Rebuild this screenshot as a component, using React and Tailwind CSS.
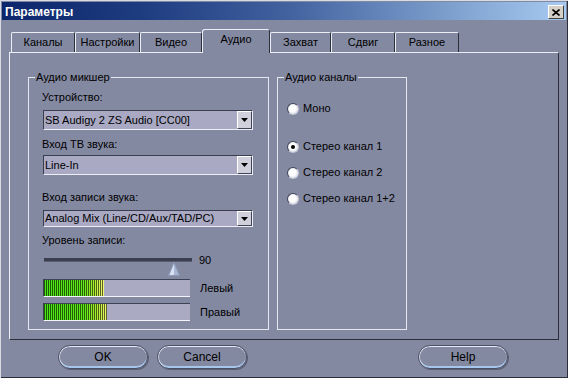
import React from "react";

const BG = "bg-[#8489a2]";

function Tab({ label, w, selected }) {
  if (selected) {
    return (
      <div
        className={`${w} h-[24px] ${BG} border-t border-l border-r border-t-[#eceef6] border-l-[#eceef6] border-r-[#2c2e3a] rounded-t-[3px] flex justify-center pt-[3px]`}
      >
        {label}
      </div>
    );
  }
  return (
    <div
      className={`${w} h-[20px] mb-[1px] ${BG} border-t border-l border-r border-t-[#eceef6] border-l-[#eceef6] border-r-[#2c2e3a] rounded-t-[2px] flex items-center justify-center`}
    >
      {label}
    </div>
  );
}

function Select({ value, h }) {
  return (
    <div
      className={`ml-[1px] w-[210px] ${h} bg-[#a9a9c3] border border-t-[#3a3e50] border-l-[#3a3e50] border-b-[#eeeef6] border-r-[#eeeef6] flex items-stretch justify-between`}
    >
      <span className="pl-[1px] self-center whitespace-nowrap">{value}</span>
      <span className="w-[15px] bg-[#d0d0dc] border border-t-[#ffffff] border-l-[#ffffff] border-b-[#40445a] border-r-[#40445a] flex items-center justify-center">
        <svg width="7" height="4" viewBox="0 0 7 4">
          <polygon points="0,0 7,0 3.5,4" fill="#000" />
        </svg>
      </span>
    </div>
  );
}

function Level({ fill }) {
  return (
    <div className="ml-[1px] w-[147px] h-[18px] bg-[#aaaac3] border-t border-l border-b border-t-[#3e4256] border-l-[#3e4256] border-b-[#f4f4fa] flex">
      <div
        className="h-full bg-[linear-gradient(90deg,#48e414_0%,#60ec18_65%,#b0f030_85%,#f4f870_100%)] flex"
        style={{ width: fill }}
      >
        <div className="w-full h-full bg-[repeating-linear-gradient(90deg,#000000_0px_1px,#00000000_1px_2px)] opacity-60" />
      </div>
    </div>
  );
}

function Radio({ checked }) {
  return (
    <span className="w-[12px] h-[12px] rounded-full flex items-center justify-center border border-t-[#44485c] border-l-[#44485c] border-b-[#c4c6d6] border-r-[#c4c6d6] bg-[radial-gradient(circle_at_45%_45%,#ffffff_40%,#c2c4d2_100%)]">
      {checked && <span className="w-[4px] h-[4px] rounded-full bg-black" />}
    </span>
  );
}

function RadioRow({ label, checked, mt }) {
  return (
    <div className={`${mt} h-[13px] flex items-center`}>
      <Radio checked={checked} />
      <span className="ml-[4px] whitespace-nowrap">{label}</span>
    </div>
  );
}

function PillButton({ label, className }) {
  return (
    <div
      className={`${className} w-[90px] h-[24px] rounded-full border border-[#4c5064] shadow-[inset_0_1px_0_#e6eaf6,inset_1px_0_0_#d8dcea,inset_0_-2px_0_#a6c6ec,1px_1px_0_#5a5e72] flex items-center justify-center text-[12px]`}
    >
      {label}
    </div>
  );
}

export default function App() {
  return (
    <div
      className={`w-[568px] h-[378px] ${BG} p-[2px] shadow-[inset_1px_1px_0_#d8dae4,inset_-1px_-1px_0_#2a2c38] font-['Liberation_Sans',Arial,sans-serif] text-[11px] leading-[13px] text-black overflow-hidden flex flex-col`}
    >
      {/* Title bar */}
      <div className="h-[18px] shrink-0 flex justify-between items-start bg-[linear-gradient(90deg,#0c266c_0%,#1e3c80_25%,#40609e_50%,#7496c6_75%,#a6caf0_100%)]">
        <span className="pl-[3px] pt-[4px] text-[12px] leading-[13px] font-bold text-white">
          Параметры
        </span>
        <div className="mt-[3px] mr-[2px] w-[16px] h-[14px] bg-[#d4d0c8] border border-t-[#ffffff] border-l-[#ffffff] border-b-[#404040] border-r-[#404040] flex items-center justify-center">
          <svg width="8" height="7" viewBox="0 0 8 7">
            <path d="M0.5 0.5 L7.5 6.5 M7.5 0.5 L0.5 6.5" stroke="#000" strokeWidth="1.6" fill="none" />
          </svg>
        </div>
      </div>

      {/* Tabs */}
      <div className="flex items-end ml-[9px] mt-[9px] h-[24px] relative z-10 -mb-px shrink-0">
        <Tab label="Каналы" w="w-[64px]" />
        <Tab label="Настройки" w="w-[65px]" />
        <Tab label="Видео" w="w-[62px]" />
        <Tab label="Аудио" w="w-[68px]" selected />
        <Tab label="Захват" w="w-[61px]" />
        <Tab label="Сдвиг" w="w-[64px]" />
        <Tab label="Разное" w="w-[64px]" />
      </div>

      {/* Panel */}
      <div className="mx-[7px] h-[288px] shrink-0 border border-t-[#eceef6] border-l-[#eceef6] border-r-[#2c2e3a] border-b-[#2c2e3a] flex items-start pl-[18px] pt-[24px]">
        {/* Audio mixer group */}
        <div className="relative w-[241px] h-[253px] border border-[#e6e8f0] flex flex-col pl-[13px] pt-[13px]">
          <span className={`absolute -top-[7px] left-[6px] px-[1px] ${BG} whitespace-nowrap`}>
            Аудио микшер
          </span>
          <span>Устройство:</span>
          <div className="mt-[6px]">
            <Select value="SB Audigy 2 ZS Audio [CC00]" h="h-[20px]" />
          </div>
          <span className="mt-[8px]">Вход ТВ звука:</span>
          <div className="mt-[4px]">
            <Select value="Line-In" h="h-[20px]" />
          </div>
          <span className="mt-[16px]">Вход записи звука:</span>
          <div className="mt-[6px]">
            <Select value="Analog Mix (Line/CD/Aux/TAD/PC)" h="h-[17px]" />
          </div>
          <span className="mt-[7px]">Уровень записи:</span>
          <div className="mt-[7px] flex items-start">
            <div className="ml-[2px] w-[148px] flex flex-col">
              <div className="mt-[4px] h-[4px] bg-[#3a3e4e] border-b border-b-[#5a5e70]" />
              <svg className="ml-[124px]" width="12" height="14" viewBox="0 0 12 14">
                <polygon points="6,0.5 11.5,13.5 0.5,13.5" fill="#a8b8d4" stroke="#8c98b4" strokeWidth="1" />
                <polygon points="6,2 6,13 1.5,13" fill="#d8e2f2" />
              </svg>
            </div>
            <span className="ml-[7px]">90</span>
          </div>
          <div className="mt-[3px] flex items-center">
            <Level fill="60px" />
            <span className="ml-[10px]">Левый</span>
          </div>
          <div className="mt-[6px] flex items-center">
            <Level fill="63px" />
            <span className="ml-[10px]">Правый</span>
          </div>
        </div>

        {/* Audio channels group */}
        <div className="relative ml-[8px] w-[130px] h-[253px] border border-[#e6e8f0] flex flex-col pl-[9px]">
          <span className={`absolute -top-[7px] left-[6px] px-[1px] ${BG} whitespace-nowrap`}>
            Аудио каналы
          </span>
          <RadioRow label="Моно" mt="mt-[24px]" />
          <RadioRow label="Стерео канал 1" checked mt="mt-[25px]" />
          <RadioRow label="Стерео канал 2" mt="mt-[13px]" />
          <RadioRow label="Стерео канал 1+2" mt="mt-[13px]" />
        </div>
      </div>

      {/* Buttons */}
      <div className="flex mt-[5px] pl-[56px] shrink-0">
        <PillButton label="OK" />
        <PillButton label="Cancel" className="ml-[9px]" />
        <PillButton label="Help" className="ml-[171px]" />
      </div>
    </div>
  );
}
